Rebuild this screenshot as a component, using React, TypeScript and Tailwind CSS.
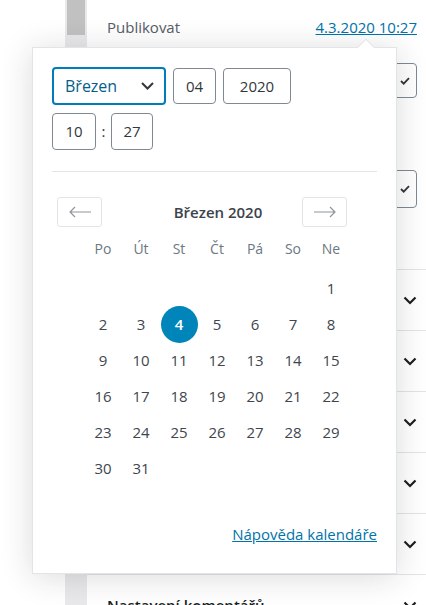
import React from 'react';

const weekDays = ['Po', 'Út', 'St', 'Čt', 'Pá', 'So', 'Ne'];

// March 2020 starts on Sunday
const days: (number | null)[] = [
  ...Array(6).fill(null),
  ...Array.from({ length: 31 }, (_, i) => i + 1),
];

const Chevron = () => (
  <svg width="14" height="9" viewBox="0 0 14 9" fill="none">
    <path d="M1.5 1.5l5.5 5.5 5.5-5.5" stroke="#1e1e1e" strokeWidth="2.2" />
  </svg>
);

const Check = () => (
  <svg width="10" height="8" viewBox="0 0 10 8" fill="none">
    <path d="M1 4l2.7 2.7L9 1.2" stroke="#32373c" strokeWidth="1.8" />
  </svg>
);

const Arrow = ({ dir }: { dir: 'left' | 'right' }) => (
  <svg width="24" height="12" viewBox="0 0 24 12" fill="none">
    {dir === 'left' ? (
      <path d="M23 6H2M7 1L2 6l5 5" stroke="#8f959b" strokeWidth="1.2" />
    ) : (
      <path d="M1 6h21M17 1l5 5-5 5" stroke="#8f959b" strokeWidth="1.2" />
    )}
  </svg>
);

const SidebarRow = ({ title }: { title?: string }) => (
  <div className="h-[61px] shrink-0 border-t border-[#e2e4e7] flex items-center justify-between pl-[20px] pr-[9px]">
    <span className="text-[15px] font-semibold text-[#191e23]">{title}</span>
    <Chevron />
  </div>
);

const DatePopover = () => (
  <div className="absolute left-[32px] top-[47px] w-[365px] h-[527px] bg-white border border-[#e2e4e7] shadow-[0_3px_30px_rgba(25,30,35,0.16)] flex flex-col px-[19px] pt-[19px]">
    {/* arrow */}
    <div className="absolute left-[327px] top-[-7px] w-[12px] h-[12px] rotate-45 bg-white border-l border-t border-[#e2e4e7]" />

    {/* date inputs */}
    <div className="flex items-center gap-[7px]">
      <div className="w-[114px] h-[38px] border-2 border-[#007cba] rounded-[4px] flex items-center justify-between pl-[11px] pr-[10px] text-[16px] text-[#016087]">
        <span>Březen</span>
        <svg width="13" height="8" viewBox="0 0 13 8" fill="none">
          <path d="M1 1l5.5 5.5L12 1" stroke="#32373c" strokeWidth="2" />
        </svg>
      </div>
      <div className="w-[43px] h-[36px] border border-[#7e8993] rounded-[4px] flex items-center justify-center text-[15px] text-[#32373c]">
        04
      </div>
      <div className="w-[68px] h-[36px] border border-[#7e8993] rounded-[4px] flex items-center justify-center text-[15px] text-[#32373c]">
        2020
      </div>
    </div>

    {/* time inputs */}
    <div className="flex items-center mt-[8px]">
      <div className="w-[44px] h-[37px] border border-[#7e8993] rounded-[4px] flex items-center justify-center text-[15px] text-[#32373c]">
        10
      </div>
      <span className="w-[15px] text-center text-[15px] text-[#32373c]">:</span>
      <div className="w-[42px] h-[37px] border border-[#7e8993] rounded-[4px] flex items-center justify-center text-[15px] text-[#32373c]">
        27
      </div>
    </div>

    <div className="h-px bg-[#e2e4e7] mt-[21px]" />

    {/* month nav */}
    <div className="flex items-center mt-[25px] h-[30px]">
      <button className="ml-[5px] w-[45px] h-[30px] border border-[#e2e4e7] rounded-[3px] flex items-center justify-center">
        <Arrow dir="left" />
      </button>
      <div className="flex-1 pl-[32px] text-center text-[15px] font-semibold text-[#3c434a]">Březen 2020</div>
      <button className="mr-[30px] w-[45px] h-[30px] border border-[#e2e4e7] rounded-[3px] flex items-center justify-center">
        <Arrow dir="right" />
      </button>
    </div>

    {/* weekdays */}
    <div className="ml-[32px] mt-[11px] grid grid-cols-[repeat(7,38px)] h-[20px] items-center text-[14px] text-[#6c7781]">
      {weekDays.map((d) => (
        <div key={d} className="text-center">
          {d}
        </div>
      ))}
    </div>

    {/* days */}
    <div className="ml-[32px] mt-[12px] grid grid-cols-[repeat(7,38px)] auto-rows-[36px] text-[15px] text-[#40464d]">
      {days.map((d, i) => (
        <div key={i} className="flex items-center justify-center">
          {d === 4 ? (
            <span className="w-[37px] h-[37px] rounded-full bg-[#0085ba] text-white font-semibold flex items-center justify-center">
              4
            </span>
          ) : (
            d
          )}
        </div>
      ))}
    </div>

    <div className="mt-auto mb-[27px] text-right">
      <a className="text-[15px] leading-[20px] text-[#0073aa] underline">Nápověda kalendáře</a>
    </div>
  </div>
);

export default function App() {
  return (
    <div className="relative w-[426px] h-[605px] overflow-hidden bg-white flex font-['Open_Sans',sans-serif]">
      <div className="w-[65px] shrink-0" />
      <div className="w-[22px] shrink-0 bg-[#e9e9eb] px-[2px]">
        <div className="h-[35px] bg-[#c1c1c1]" />
      </div>

      <div className="flex-1 flex flex-col">
        <div className="h-[50px] shrink-0 flex items-center justify-between pl-[20px] pr-[9px] pt-[4px]">
          <span className="text-[15px] text-[#555d66]">Publikovat</span>
          <a className="text-[15px] text-[#0073aa] underline">4.3.2020 10:27</a>
        </div>

        <div className="mt-[13px] h-[35px] shrink-0 flex justify-end pr-[9px]">
          <div className="w-[120px] h-full border border-[#7e8993] rounded-[4px] flex items-center justify-end pr-[6px]">
            <Check />
          </div>
        </div>

        <div className="mt-[72px] h-[38px] shrink-0 flex justify-end pr-[9px]">
          <div className="w-[120px] h-full border border-[#7e8993] rounded-[4px] flex items-center justify-end pr-[6px]">
            <Check />
          </div>
        </div>

        <div className="mt-[61px]" />
        <SidebarRow />
        <SidebarRow />
        <SidebarRow />
        <SidebarRow />
        <SidebarRow />
        <SidebarRow title="Nastavení komentářů" />
      </div>

      <DatePopover />
    </div>
  );
}
